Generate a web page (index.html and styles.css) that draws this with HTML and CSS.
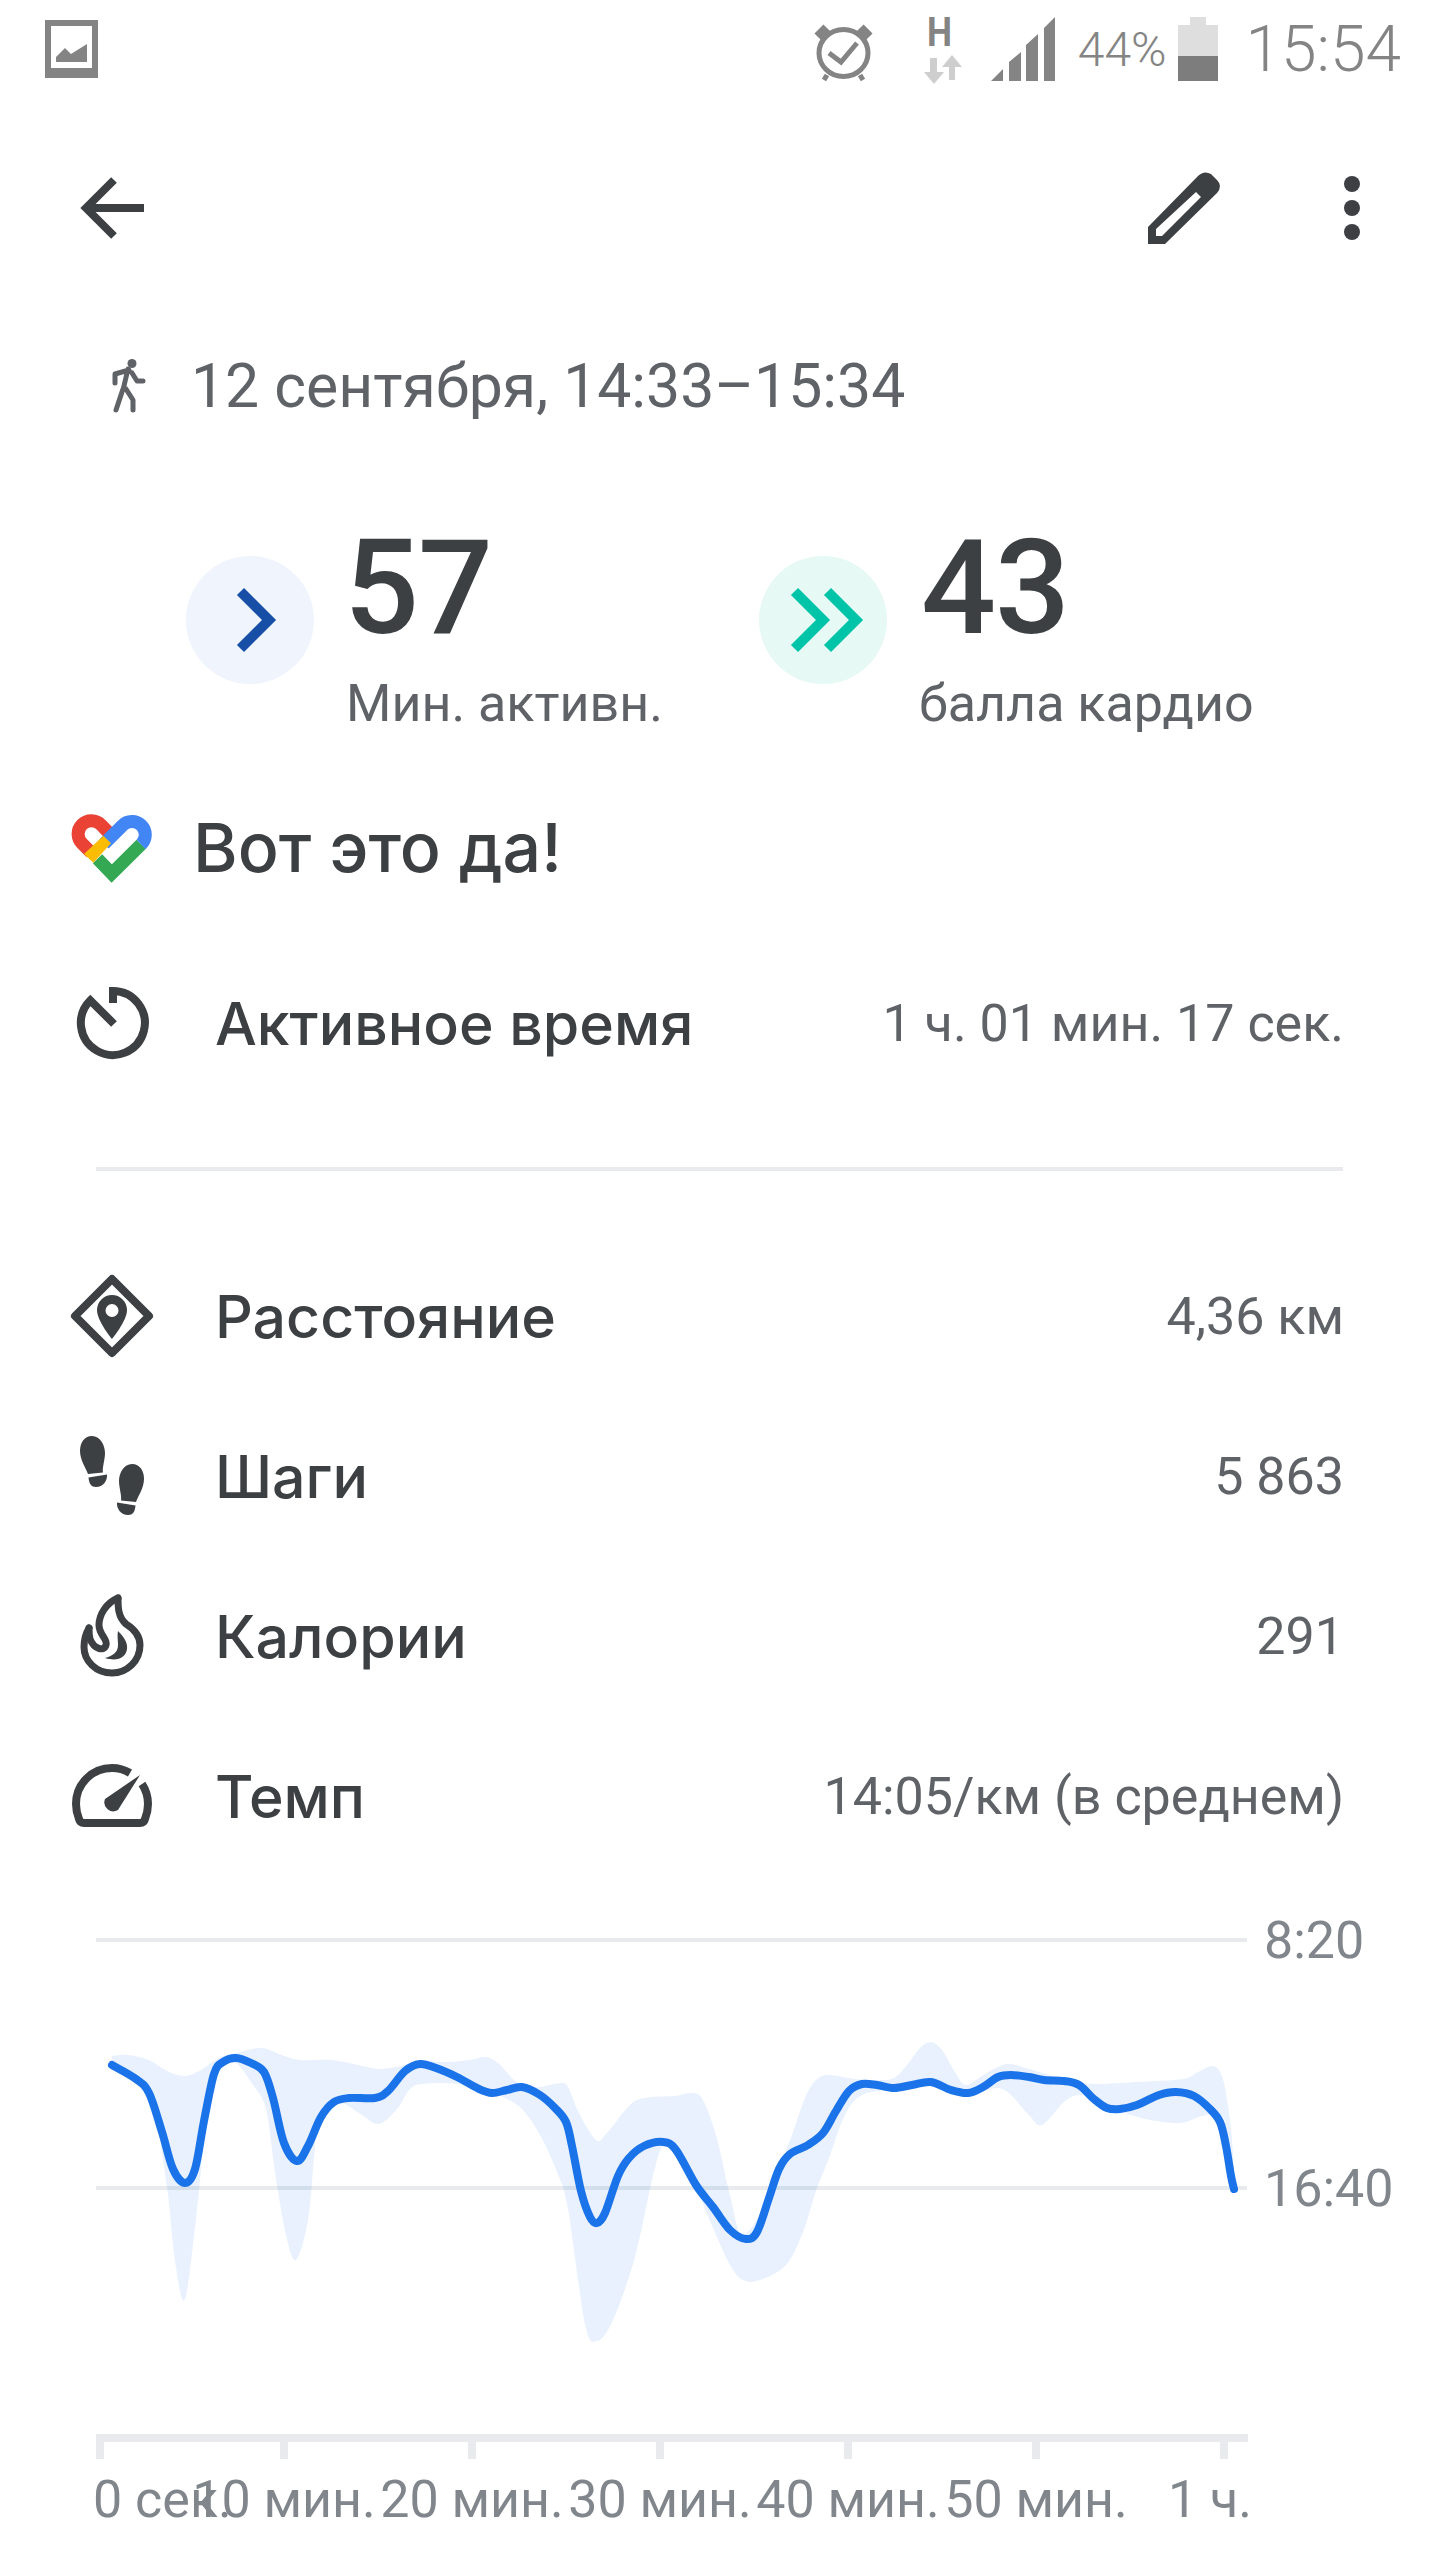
FILE: index.html
```html
<!DOCTYPE html>
<html lang="ru">
<head>
  <meta charset="UTF-8" />
  <title>Ходьба, 12 сентября</title>
  <link rel="stylesheet" href="styles.css">
</head>
<body>
  <div class="status-bar">
    <svg class="status-image" viewBox="0 0 53 58">
      <path fill-rule="evenodd" d="M0 0H53V58H0ZM6 6V48H47V6Z"/>
      <path d="M11 37L20 28L26 34L42 24V42H11Z"/>
    </svg>
    <div class="status-right">
      <svg class="status-alarm" viewBox="0 0 59 63">
        <ellipse cx="29.500" cy="35" rx="24.500" ry="23.500" fill="none" stroke-width="5"/>
        <path class="status-line" d="M4 19L13 10M46 10L55 19" stroke-width="10"/>
        <path class="status-line" d="M15 35L27 44L43 25" stroke-width="5"/>
        <path class="status-line" d="M13 57L10 62M46 57L49 62" stroke-width="5"/>
      </svg>
      <svg class="status-net" viewBox="0 0 40 70">
        <text class="status-h" x="3" y="30" textLength="25" lengthAdjust="spacingAndGlyphs">H</text>
        <path class="status-arrows" d="M6 42H13V56H20L10 68L0 56H6ZM25 51H18L28 39L38 51H31V64H25Z"/>
      </svg>
      <svg class="status-signal" viewBox="0 0 64 64">
        <path d="M0 64L12 52V64ZM18 45L30 35V64H18ZM35 28L47 17V64H35ZM53 11L64 0V64H53Z"/>
      </svg>
      <span class="status-percent">44%</span>
      <svg class="status-battery" viewBox="0 0 40 64">
        <path class="battery-empty" d="M12 0H28V8H40V39H0V8H12Z"/>
        <rect class="battery-full" x="0" y="39" width="40" height="25"/>
      </svg>
      <span class="status-time">15:54</span>
    </div>
  </div>

  <div class="toolbar">
    <svg class="tool-back" viewBox="0 0 64 64">
      <path d="M63 32H6M33 4L5 32L33 60"/>
    </svg>
    <svg class="tool-edit" viewBox="0 0 72 72">
      <path fill-rule="evenodd" d="M0 72V55L50 4Q56 -2 63 2L69 8Q75 14 69 21L17 72ZM8 57V64H14L53 25L48 20Z"/>
    </svg>
    <div class="tool-more"><i></i><i></i><i></i></div>
  </div>

  <div class="session">
    <svg class="session-icon" viewBox="0 0 33 54">
      <circle cx="20" cy="4.500" r="4.500"/>
      <path d="M3 24V15L17 11M16 10L11 31M11 30L4 51M14 30L21 41V51M20 14L25 22H31"/>
    </svg>
    <span>12 сентября, 14:33–15:34</span>
  </div>

  <div class="stats">
    <div class="stat">
      <div class="stat-badge badge-move">
        <svg viewBox="0 0 128 128"><path d="M54.500 35.500L83 64L54.500 92.500"/></svg>
      </div>
      <div class="stat-text">
        <div class="stat-number">57</div>
        <div class="stat-label">Мин. активн.</div>
      </div>
    </div>
    <div class="stat">
      <div class="stat-badge badge-heart">
        <svg viewBox="0 0 128 128"><path d="M35.500 35.500L64 64L35.500 92.500M68.500 35.500L97 64L68.500 92.500"/></svg>
      </div>
      <div class="stat-text">
        <div class="stat-number stat-number-cardio">43</div>
        <div class="stat-label">балла кардио</div>
      </div>
    </div>
  </div>

  <div class="cheer">
    <svg class="cheer-logo" viewBox="0 0 79 68">
      <path stroke="#ea4335" d="M19 37.500L10.300 28.700A13.300 13.300 0 1 1 29.100 9.900L36 17"/>
      <path stroke="#34a853" d="M25.500 43.800L39.700 58.500L69.100 29.400"/>
      <path stroke="#4285f4" d="M32 28.800L50.300 10.600A13.300 13.300 0 1 1 69.100 29.400"/>
      <path fill="#fbbc04" d="M12 39L31.300 20.700L39 28.300L21.300 47.700Z"/>
    </svg>
    <span>Вот это да!</span>
  </div>

  <div class="metric metric-active">
    <div class="metric-icon">
      <svg class="icon-timer" viewBox="0 0 73 72">
        <path d="M37 16V4A32 32 0 1 1 14.300 13.300L38 37"/>
      </svg>
    </div>
    <span class="metric-label">Активное время</span>
    <span class="metric-value">1 ч. 01 мин. 17 сек.</span>
  </div>

  <div class="divider"></div>

  <div class="metrics">
    <div class="metric">
      <div class="metric-icon">
        <svg class="icon-solid" width="84" height="84" viewBox="0 0 84 84">
          <path class="icon-outline" d="M42 5L79 42L42 79L5 42Z"/>
          <path fill-rule="evenodd" d="M42 21A15 15 0 0 0 27 36C27 47 42 65 42 65S57 47 57 36A15 15 0 0 0 42 21ZM42 30A6.500 6.500 0 1 1 42 43A6.500 6.500 0 1 1 42 30Z"/>
        </svg>
      </div>
      <span class="metric-label">Расстояние</span>
      <span class="metric-value">4,36 км</span>
    </div>
    <div class="metric">
      <div class="metric-icon">
        <svg class="icon-solid" width="64" height="80" viewBox="0 0 64 80">
          <path d="M12 0C20 0 25 9 25 17C25 24 22 32 23 36.500L8 38C6 32 0 24 0 15C0 7 4 0 12 0Z"/>
          <path d="M8.500 41.500L27 38.500C27.500 45 23 51 16 51C10 51 9 46 8.500 41.500Z"/>
          <path d="M52 28C44 28 39 37 39 45C39 52 42 60 41 64.500L56 66C58 60 64 52 64 43C64 35 60 28 52 28Z"/>
          <path d="M55.500 69.500L37 66.500C36.500 73 41 79 48 79C54 79 55 74 55.500 69.500Z"/>
        </svg>
      </div>
      <span class="metric-label">Шаги</span>
      <span class="metric-value">5 863</span>
    </div>
    <div class="metric">
      <div class="metric-icon">
        <svg class="icon-solid" width="64" height="82" viewBox="0 0 64 82">
          <path class="icon-outline icon-outline-round" d="M38 3C38 12 38 22 46 29C54 34 60 40 60 50C60 66 47 78 32 78C16 78 4 66 4 52C4 44 6 38 9 33"/>
          <path class="icon-outline icon-outline-round" d="M38 3C26 8 19 20 19 30C19 40 28 44 26 50C24 57 14 54 10 44C9 40 9 36 9 33"/>
          <path d="M38 36C44 42 48 48 47 54C46 62 38 67 25 63C32 61 38 58 38 50C38 45 37 40 38 36Z"/>
        </svg>
      </div>
      <span class="metric-label">Калории</span>
      <span class="metric-value">291</span>
    </div>
    <div class="metric">
      <div class="metric-icon">
        <svg class="icon-solid" width="80" height="64" viewBox="0 0 80 64">
          <path class="icon-outline" d="M58 9C53 6 47 4 40 4C20 4 4 20 4 40C4 46 5 50 7 55Q8 59 12 59H68Q72 59 73 55C75 50 76 46 76 40C76 33 74 26 70 20"/>
          <path d="M68 11L46 46A9 9 0 0 1 33 35Z"/>
        </svg>
      </div>
      <span class="metric-label">Темп</span>
      <span class="metric-value">14:05/км (в среднем)</span>
    </div>
  </div>

  <svg class="chart" viewBox="0 0 1440 640">
    <!-- grid -->
    <rect class="chart-grid" x="96" y="38" width="1151" height="4"/>
    <rect class="chart-grid" x="96" y="286" width="1151" height="4"/>
    <text class="chart-text" x="1264" y="58">8:20</text>
    <text class="chart-text" x="1264" y="306">16:40</text>

    <path id="paceBand" class="chart-band"/>
    <path id="paceLine" class="chart-line"/>

    <!-- time axis -->
    <rect class="chart-axis" x="96" y="534" width="1152" height="8"/>
    <rect class="chart-axis" x="96" y="534" width="8" height="25"/>
    <rect class="chart-axis" x="280" y="534" width="8" height="25"/>
    <rect class="chart-axis" x="468" y="534" width="8" height="25"/>
    <rect class="chart-axis" x="656" y="534" width="8" height="25"/>
    <rect class="chart-axis" x="844" y="534" width="8" height="25"/>
    <rect class="chart-axis" x="1032" y="534" width="8" height="25"/>
    <rect class="chart-axis" x="1220" y="534" width="8" height="25"/>
    <text class="chart-text" x="93" y="617">0 сек.</text>
    <text class="chart-text tick-mid" x="284" y="617">10 мин.</text>
    <text class="chart-text tick-mid" x="472" y="617">20 мин.</text>
    <text class="chart-text tick-mid" x="660" y="617">30 мин.</text>
    <text class="chart-text tick-mid" x="848" y="617">40 мин.</text>
    <text class="chart-text tick-mid" x="1036" y="617">50 мин.</text>
    <text class="chart-text tick-end" x="1252" y="617">1 ч.</text>
  </svg>

  <script src="chart.js"></script>
</body>
</html>
```

FILE: styles.css
```css
body {
  margin: 0;
  width: 1440px;
  height: 2560px;
  overflow: hidden;
  background-color: #fff;
  font-family: Roboto, sans-serif;
  color: #3c4043;
}
svg {
  display: block;
  overflow: visible;
}

/* status bar */
.status-bar {
  display: flex;
  align-items: center;
  justify-content: space-between;
  height: 98px;
  padding: 0 39px 0 45px;
  fill: #848484;
  stroke: #848484;
  color: #848484;
}
.status-bar path, .status-bar text {stroke: none;}
.status-bar .status-line {
  fill: none;
  stroke: #848484;
}
.status-image {width: 53px; height: 58px;}
.status-right {
  display: flex;
  align-items: center;
}
.status-alarm {width: 59px; height: 63px;}
.status-net {
  width: 40px;
  height: 70px;
  margin: 4px 0 0 51px;
}
.status-h {
  font-size: 41px;
  font-weight: 700;
}
.status-bar .status-arrows {fill: #cecece;}
.status-signal {
  width: 64px;
  height: 64px;
  margin-left: 27px;
}
.status-percent {
  margin-left: 23px;
  font-size: 48px;
  font-weight: 300;
}
.status-battery {
  width: 40px;
  height: 64px;
  margin-left: 11px;
}
.status-bar .battery-empty {fill: #dedede;}
.battery-full {fill: #7d7d7d; stroke: none;}
.status-time {
  margin-left: 28px;
  font-size: 64px;
  font-weight: 300;
}

/* toolbar */
.toolbar {
  display: flex;
  align-items: center;
  height: 220px;
  padding-left: 81px;
}
.tool-back {
  width: 64px;
  height: 64px;
  fill: none;
  stroke: #3c4043;
  stroke-width: 8;
}
.tool-edit {
  width: 72px;
  height: 72px;
  margin-left: 1003px;
  fill: #3c4043;
}
.tool-more {
  display: flex;
  flex-direction: column;
  gap: 8px;
  margin-left: 124px;
}
.tool-more i {
  width: 16px;
  height: 16px;
  border-radius: 50%;
  background-color: #3c4043;
}

/* date line */
.session {
  display: flex;
  align-items: center;
  height: 136px;
  padding-left: 112px;
  font-size: 60.700px;
  color: #5f6368;
}
.session-icon {
  width: 33px;
  height: 54px;
  margin-right: 46px;
  fill: #5f6368;
}
.session-icon path {
  fill: none;
  stroke: #5f6368;
  stroke-width: 5;
  stroke-linecap: round;
  stroke-linejoin: round;
}

/* goals */
.stats {
  display: flex;
  height: 200px;
  margin-top: 66px;
  padding-left: 186px;
}
.stat {
  display: flex;
  align-items: center;
  width: 573px;
}
.stat-badge {
  flex: none;
  width: 128px;
  height: 128px;
  border-radius: 50%;
}
.stat-badge svg {
  width: 128px;
  height: 128px;
  fill: none;
  stroke-width: 10;
}
.badge-move {background-color: #f0f4fc;}
.badge-move svg {stroke: #174ea6;}
.badge-heart {background-color: #e6f9f5;}
.badge-heart svg {stroke: #00c4a7;}
.stat-text {
  margin: 27px 0 0 32px;
}
.stat-number {
  margin-left: -2px;
  font-size: 132px;
  font-weight: 500;
  line-height: 140px;
  letter-spacing: -1px;
}
.stat-number-cardio {margin-left: 2px;}
.stat-label {
  font-size: 52px;
  line-height: 91px;
  color: #5f6368;
}

.cheer {
  display: flex;
  align-items: center;
  height: 120px;
  margin-top: 69px;
  padding-left: 72px;
  font-family: Inter, sans-serif;
  font-size: 68px;
  font-weight: 500;
}
.cheer span {margin: -5px 0 0 2px;}
.cheer-logo {
  width: 79px;
  height: 68px;
  margin-right: 40px;
  fill: none;
  stroke-width: 13;
}

/* metrics */
.metric {
  display: flex;
  align-items: center;
  height: 160px;
  padding-right: 96px;
}
.metric-active {
  height: 120px;
  margin-top: 54px;
}
.metric-icon {
  display: flex;
  align-items: center;
  justify-content: center;
  width: 84px;
  margin: 0 61px 0 70px;
}
.icon-timer {
  width: 73px;
  height: 72px;
  fill: none;
  stroke: #3c4043;
  stroke-width: 8;
}
.icon-solid {fill: #3c4043;}
.icon-outline {
  fill: none;
  stroke: #3c4043;
  stroke-width: 8;
  stroke-linejoin: round;
}
.icon-outline-round {stroke-width: 7; stroke-linecap: round;}
.metric-label {
  font-family: Inter, sans-serif;
  font-size: 59px;
  font-weight: 500;
}
.metric-value {
  margin-left: auto;
  font-size: 52px;
  color: #5f6368;
}
.divider {
  height: 4px;
  margin: 84px 97px 65px 96px;
  background-color: #e8eaed;
}

/* pace chart */
.chart {
  width: 1440px;
  height: 640px;
  margin-top: 24px;
}
.chart-grid, .chart-axis {fill: #e8eaed;}
.chart-text {
  font-size: 52px;
  fill: #80868b;
}
.tick-mid {text-anchor: middle;}
.tick-end {text-anchor: end;}
.chart-band {
  fill: #1a73e8;
  fill-opacity: 0.1;
}
.chart-line {
  fill: none;
  stroke: #1a73e8;
  stroke-width: 8;
  stroke-linecap: round;
}
```

FILE: chart.js
```js
// Pace over the walk: x is px along the chart, y is px from the top of the svg
var line = [
  [112,165],[136,179],[149,193],[162,232],[173,269],[185,283],[195,269],[204,221],[214,174],[223,162],
  [236,158],[251,163],[264,172],[273,198],[284,243],[297,261],[308,246],[321,217],[334,202],[349,198],
  [375,198],[388,191],[405,171],[420,164],[436,168],[457,177],[479,189],[492,193],[507,190],[522,187],
  [540,195],[555,208],[566,222],[572,246],[581,291],[590,317],[597,323],[605,313],[618,276],[629,258],
  [644,246],[663,242],[676,250],[696,285],[713,307],[730,330],[746,339],[757,332],[769,298],[779,269],
  [790,254],[808,245],[823,233],[836,211],[849,191],[862,184],[877,185],[894,188],[912,185],[931,182],
  [951,190],[968,193],[983,187],[998,177],[1011,175],[1029,177],[1044,180],[1064,181],[1079,185],[1094,199],
  [1107,208],[1120,209],[1137,205],[1159,195],[1176,192],[1194,196],[1209,208],[1220,222],[1226,246],[1231,276],
  [1234,289]
];

// Range of the pace around the line, top edge then back along the bottom
var band = [
  [112,156],[128,155],[149,160],[167,171],[184,176],[199,171],[219,158],[240,152],[262,148],[284,156],
  [301,160],[332,160],[358,165],[379,169],[401,166],[423,162],[449,162],[470,160],[485,157],[498,163],
  [514,180],[527,187],[540,187],[561,183],[568,187],[579,213],[596,240],[607,233],[629,206],[644,198],
  [674,196],[694,193],[704,202],[717,239],[730,295],[743,335],[769,298],[779,269],[792,235],[805,198],
  [816,180],[829,175],[855,179],[877,180],[894,178],[907,165],[920,148],[931,142],[942,150],[955,172],
  [966,185],[985,174],[1007,164],[1029,169],[1046,174],[1064,180],[1094,184],[1137,182],[1183,179],[1198,172],
  [1213,166],[1222,176],[1228,206],[1232,239],[1234,289],
  [1226,228],[1220,215],[1202,216],[1181,223],[1150,220],[1124,213],[1107,208],[1094,199],[1079,195],[1064,202],
  [1042,225],[1029,215],[1011,195],[998,188],[981,191],[968,193],[931,184],[894,189],[862,195],[845,215],
  [829,258],[816,291],[803,332],[786,365],[760,380],[743,380],[730,365],[713,328],[700,298],[676,250],
  [663,245],[652,280],[635,357],[613,420],[597,441],[585,424],[568,309],[557,272],[540,235],[522,209],
  [505,198],[492,193],[457,184],[423,184],[410,189],[397,209],[379,224],[362,215],[345,204],[336,202],
  [318,228],[314,258],[308,320],[296,360],[286,335],[275,272],[266,209],[253,185],[236,163],[223,162],
  [210,191],[204,239],[197,309],[185,399],[175,361],[167,287],[152,198],[136,179],[112,165]
];

// Catmull-Rom through the points, written out as cubic beziers
function smooth(pts) {
  var d = 'M' + pts[0][0] + ' ' + pts[0][1];
  for (var i = 0; i < pts.length - 1; i++) {
    var p0 = pts[i - 1] || pts[i];
    var p1 = pts[i];
    var p2 = pts[i + 1];
    var p3 = pts[i + 2] || p2;
    d += 'C' + (p1[0] + (p2[0] - p0[0]) / 6) + ' ' + (p1[1] + (p2[1] - p0[1]) / 6) +
         ' ' + (p2[0] - (p3[0] - p1[0]) / 6) + ' ' + (p2[1] - (p3[1] - p1[1]) / 6) +
         ' ' + p2[0] + ' ' + p2[1];
  }
  return d;
}

document.getElementById('paceLine').setAttribute('d', smooth(line));
document.getElementById('paceBand').setAttribute('d', smooth(band) + 'Z');
```
